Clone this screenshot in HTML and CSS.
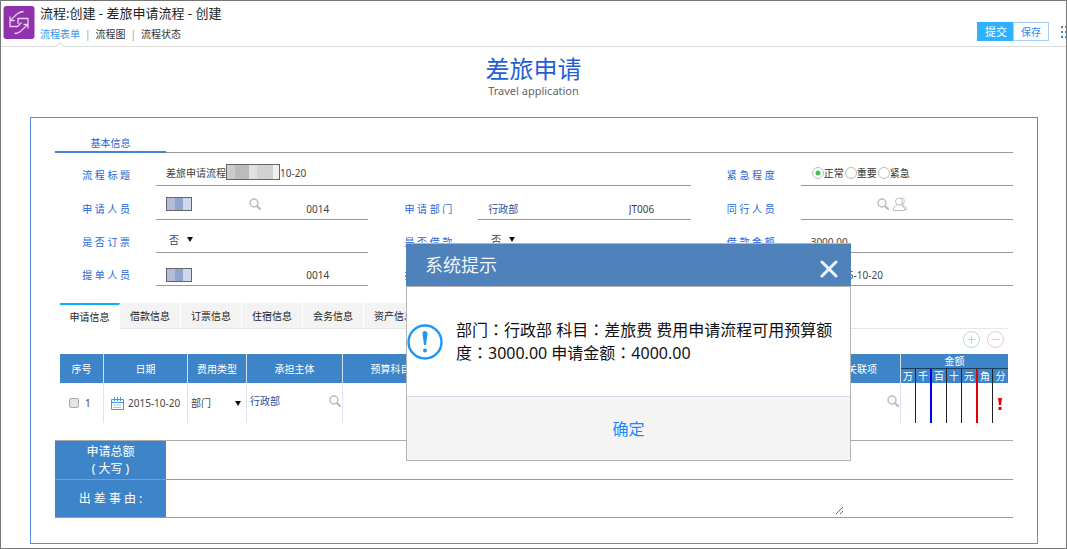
FILE: index.html
```html
<!DOCTYPE html>
<html lang="zh-CN">
<head>
    <meta charset="UTF-8">
    <meta name="viewport" content="width=device-width, initial-scale=1.0">
    <title>流程:创建 - 差旅申请流程 - 创建</title>
    <link rel="stylesheet" href="styles.css">
</head>
<body>
    <svg class="sprite" aria-hidden="true">
        <symbol id="icon-search" viewBox="0 0 12 12">
            <circle cx="5" cy="5" r="4" fill="none" stroke="currentColor" stroke-width="1.5"/>
            <path d="M8.2 8.2L11 11" stroke="currentColor" stroke-width="2.2" stroke-linecap="round"/>
        </symbol>
    </svg>
    <div class="page">
        <header class="topbar">
            <svg class="logo" viewBox="0 0 31 33" aria-hidden="true">
                <rect width="31" height="33" rx="3" fill="#9132ad"/>
                <g fill="none" stroke="#ecd3f3" stroke-width="1.3" stroke-linejoin="round">
                    <path d="M20 5.500C15 5.500 12.500 9 7 14.500M6.500 10.500V20.500H14L18 16.500"/>
                    <path d="M11 27.500C16 27.500 18.500 24 24 18.500M24.500 22.500V12.500H14.500V18M6.500 14.500H11M24.500 18.500H20"/>
                </g>
            </svg>
            <div class="topbar-text">
                <h1>流程:创建 - 差旅申请流程 - 创建</h1>
                <nav>
                    <a href="#form" class="active">流程表单</a>
                    <a href="#chart">流程图</a>
                    <a href="#status">流程状态</a>
                </nav>
            </div>
            <div class="topbar-actions">
                <button type="submit" form="travel-form" class="btn-submit">提交</button>
                <button type="button" class="btn-save">保存</button>
                <button type="button" class="btn-more" aria-label="更多">
                    <svg viewBox="0 0 6 12" width="6" height="12" fill="#4a80c4">
                        <path d="M0 0h2v2H0zM4 0h2v2H4zM0 5h2v2H0zM4 5h2v2H4zM0 10h2v2H0zM4 10h2v2H4z"/>
                    </svg>
                </button>
            </div>
        </header>

        <div class="doc-title">
            <h2>差旅申请</h2>
            <p>Travel application</p>
        </div>

        <form class="panel" id="travel-form">
            <div class="section-head"><h3>基本信息</h3></div>

            <div class="form-grid">
                <span class="label">流 程 标 题</span>
                <div class="field field-wide field-high">
                    <span>差旅申请流程</span>
                    <span class="mask mask-gray"></span>
                    <span>10-20</span>
                </div>
                <span class="label">紧 急 程 度</span>
                <div class="field radios">
                    <input type="radio" name="level" id="level-1" checked><label for="level-1">正常</label>
                    <input type="radio" name="level" id="level-2"><label for="level-2">重要</label>
                    <input type="radio" name="level" id="level-3"><label for="level-3">紧急</label>
                </div>

                <label class="label" for="staff-code">申 请 人 员</label>
                <div class="field">
                    <div class="lookup lookup-high">
                        <span class="mask mask-blue"></span>
                        <button type="button" class="icon-btn" aria-label="选择申请人员"><svg><use href="#icon-search"/></svg></button>
                    </div>
                    <input class="code" id="staff-code" value="0014">
                </div>
                <label class="label" for="dept-code">申 请 部 门</label>
                <div class="field">
                    <a href="#dept" class="lookup">行政部</a>
                    <input class="code" id="dept-code" value="JT006">
                </div>
                <span class="label">同 行 人 员</span>
                <div class="field field-icons">
                    <button type="button" class="icon-btn" aria-label="选择同行人员"><svg><use href="#icon-search"/></svg></button>
                    <button type="button" class="icon-btn people" aria-label="选择人员组">
                        <svg viewBox="0 0 14 14" fill="none" stroke="currentColor">
                            <circle cx="6" cy="4.500" r="3.500"/>
                            <path d="M8.500 1C12 .5 12 6 9.500 8C12 9 13.500 10 13.500 12.500H11.500M4 8C1.500 9 .5 10.500 .5 13.500H11.500C11.500 10.500 10.500 9 8 8"/>
                        </svg>
                    </button>
                </div>

                <label class="label" for="ticket">是 否 订 票</label>
                <div class="field field-high">
                    <select id="ticket"><option>否</option><option>是</option></select><span class="caret"></span>
                </div>
                <label class="label" for="loan">是 否 借 款</label>
                <div class="field field-high">
                    <select id="loan"><option>否</option><option>是</option></select><span class="caret"></span>
                </div>
                <label class="label" for="loan-amount">借 款 金 额</label>
                <div class="field"><input id="loan-amount" value="3000.00"></div>

                <label class="label" for="maker-code">提 单 人 员</label>
                <div class="field">
                    <div class="lookup"><span class="mask mask-blue"></span></div>
                    <input class="code" id="maker-code" value="0014">
                </div>
                <label class="label" for="maker-dept">提 单 部 门</label>
                <div class="field"><input id="maker-dept" value="行政部"></div>
                <label class="label" for="maker-date">提 单 日 期</label>
                <div class="field field-date"><input id="maker-date" value="2015-10-20"></div>
            </div>

            <div class="detail">
                <div class="tabs">
                    <button type="button" class="active">申请信息</button>
                    <button type="button">借款信息</button>
                    <button type="button">订票信息</button>
                    <button type="button">住宿信息</button>
                    <button type="button">会务信息</button>
                    <button type="button">资产信息</button>
                </div>
                <div class="row-tools">
                    <button type="button" class="add" aria-label="添加">
                        <svg viewBox="0 0 17 17"><circle cx="8.500" cy="8.500" r="8"/><path d="M4.500 8.500h8M8.500 4.500v8"/></svg>
                    </button>
                    <button type="button" class="remove" aria-label="删除">
                        <svg viewBox="0 0 17 17"><circle cx="8.500" cy="8.500" r="8"/><path d="M4.500 8.500h8"/></svg>
                    </button>
                </div>
                <table class="items">
                    <colgroup>
                        <col class="c-no"><col class="c-date"><col class="c-type"><col class="c-body"><col class="c-body"><col>
                        <col class="c-link">
                        <col class="c-digit"><col class="c-mark"><col class="c-digit"><col class="c-digit"><col class="c-mark"><col class="c-digit"><col class="c-digit">
                    </colgroup>
                    <thead>
                        <tr>
                            <th rowspan="2">序号</th>
                            <th rowspan="2">日期</th>
                            <th rowspan="2">费用类型</th>
                            <th rowspan="2">承担主体</th>
                            <th rowspan="2">预算科目</th>
                            <th rowspan="2"></th>
                            <th rowspan="2">关联项</th>
                            <th colspan="7" class="amount">金额</th>
                        </tr>
                        <tr class="digits">
                            <th>万</th><th class="blue">千</th><th>百</th><th>十</th><th class="red">元</th><th>角</th><th>分</th>
                        </tr>
                    </thead>
                    <tbody>
                        <tr>
                            <td><div class="cell cell-no"><input type="checkbox" id="row-1"><label for="row-1">1</label></div></td>
                            <td>
                                <div class="cell cell-date">
                                    <svg class="calendar" viewBox="0 0 13 13" aria-hidden="true">
                                        <path d="M.5 2.500h12v10H.5zM.5 5.500h12" fill="none" stroke="#3f97ee"/>
                                        <path d="M3.500 0v4M6.500 0v4M9.500 0v4" stroke="#3f97ee"/>
                                        <path d="M2.500 8h8M2.500 10.500h8" stroke="#3f97ee" stroke-dasharray="1 1"/>
                                    </svg>
                                    <span>2015-10-20</span>
                                </div>
                            </td>
                            <td>
                                <div class="cell cell-type">
                                    <select aria-label="费用类型"><option>部门</option></select><span class="caret"></span>
                                </div>
                            </td>
                            <td>
                                <div class="cell cell-body">
                                    <a href="#dept">行政部</a>
                                    <button type="button" class="icon-btn" aria-label="选择承担主体"><svg><use href="#icon-search"/></svg></button>
                                </div>
                            </td>
                            <td></td>
                            <td></td>
                            <td>
                                <div class="cell cell-body">
                                    <span></span>
                                    <button type="button" class="icon-btn" aria-label="选择关联项"><svg><use href="#icon-search"/></svg></button>
                                </div>
                            </td>
                            <td class="digit"></td><td class="digit blue"></td><td class="digit"></td><td class="digit"></td><td class="digit red"></td><td class="digit"></td>
                            <td class="required">
                                <svg viewBox="0 0 4 12" width="4" height="12" fill="#f00000" role="img" aria-label="必填"><path d="M0 0h4l-1 7H1zM.5 9h3v3h-3z"/></svg>
                            </td>
                        </tr>
                    </tbody>
                </table>
            </div>

            <table class="summary">
                <tbody>
                    <tr>
                        <th scope="row">申请总额<br>( 大写 )</th>
                        <td></td>
                    </tr>
                    <tr>
                        <th scope="row" class="reason"><label for="reason">出 差 事 由 :</label></th>
                        <td><textarea id="reason"></textarea></td>
                    </tr>
                </tbody>
            </table>
        </form>
    </div>

    <div class="dialog" role="alertdialog" aria-labelledby="dialog-title">
        <div class="dialog-head">
            <h2 id="dialog-title">系统提示</h2>
            <button type="button" aria-label="关闭">
                <svg viewBox="0 0 18 18" width="18" height="18"><path d="M2 2l14 14M16 2L2 16" stroke="#eef6fd" stroke-width="3" stroke-linecap="round"/></svg>
            </button>
        </div>
        <div class="dialog-body">
            <svg class="alert-icon" viewBox="0 0 36 36" aria-hidden="true">
                <circle cx="18" cy="18" r="16.500" fill="none" stroke="#2196f3" stroke-width="2.400"/>
                <path d="M15.500 9.500a2.500 2.500 0 0 1 5 0L19 21h-2z" fill="#2196f3"/>
                <circle cx="18" cy="26.500" r="2" fill="#2196f3"/>
            </svg>
            <p lang="zh-TW">部门：行政部 科目：差旅费 费用申请流程可用预算额度：3000.00 申请金额：4000.00</p>
        </div>
        <div class="dialog-foot">
            <button type="button">确定</button>
        </div>
    </div>
</body>
</html>
```
FILE: styles.css
```css
* {
    margin: 0;
    padding: 0;
    box-sizing: border-box;
}
body {
    font-family: "Noto Sans", "Noto Sans CJK SC", sans-serif;
    font-size: 10px;
    line-height: 14px;
    color: #444;
    background-color: #fff;
}
button, input, select, textarea {
    font: inherit;
    color: inherit;
    border: none;
    background: none;
}
button {
    cursor: pointer;
}
a {
    color: #2b4f9e;
    text-decoration: none;
}
.sprite {
    display: none;
}
.page {
    min-height: 100vh;
    border: 1px solid #777;
    overflow: hidden;
}

/* top bar */
.topbar {
    display: flex;
    height: 46px;
    padding-left: 2px;
    border-bottom: 1px solid #ddd;
}
.logo {
    width: 32px;
    height: 33px;
    margin-top: 5px;
}
.topbar-text {
    flex: 1;
    padding: 2px 0 0 5px;
}
.topbar h1 {
    font-size: 13px;
    line-height: 20px;
    font-weight: normal;
    color: #222;
}
.topbar nav {
    display: flex;
    margin-top: 4px;
}
.topbar nav a {
    position: relative;
    color: #333;
}
.topbar nav a + a::before {
    content: "|";
    margin: 0 5px;
    color: #999;
}
.topbar nav .active {
    color: #2f96f0;
}
/* small notch under the current tab */
.topbar nav .active::after {
    content: "";
    position: absolute;
    left: 50%;
    top: 16px;
    width: 5px;
    height: 5px;
    background-color: #fff;
    border: solid #ddd;
    border-width: 1px 0 0 1px;
    transform: translateX(-50%) rotate(45deg);
}
.topbar-actions {
    display: flex;
    align-items: flex-start;
    padding-top: 21px;
}
.btn-submit, .btn-save {
    width: 36px;
    height: 19px;
}
.btn-submit {
    padding-left: 2px;
    font-size: 11px;
    color: #fff;
    background-color: #2eb1ff;
}
.btn-save {
    color: #2f8ae8;
    border: 1px solid #a9cdf5;
}
.btn-more {
    width: 17px;
    height: 20px;
    padding-left: 12px;
    overflow: hidden;
}
.btn-more svg {
    display: block;
}

.doc-title {
    padding: 10px 0 18px;
    text-align: center;
}
.doc-title h2 {
    font-family: "Liberation Serif", "Noto Sans CJK SC", serif;
    font-size: 24px;
    line-height: 26px;
    font-weight: normal;
    color: #1f5fd6;
}
.doc-title p {
    font-size: 11px;
    line-height: 16px;
    color: #666;
}

/* form */
.panel {
    margin: 0 28px 4px 29px;
    padding: 0 24px 25px;
    border: 1px solid #5b8bdb;
}
.section-head {
    display: flex;
    align-items: flex-end;
    height: 35px;
    border-bottom: 1px solid #999;
}
.section-head h3 {
    width: 111px;
    margin-bottom: -1px;
    padding-bottom: 1px;
    border-bottom: 2px solid #4682d9;
    font-size: 10px;
    text-align: center;
    font-weight: normal;
    color: #1f5fd6;
}
.form-grid {
    display: grid;
    grid-template-columns: 101px 1fr 110px 1fr 110px 1fr;
    grid-template-rows: 33px 34px 33px 33px;
}
.label {
    align-self: end;
    padding: 0 26px 4px 0;
    text-align: right;
    white-space: nowrap;
    color: #2766d4;
}
.field {
    display: flex;
    align-items: flex-end;
    min-width: 0;
    padding: 0 0 3px 10px;
    border-bottom: 1px solid #999;
}
.field-high {
    padding-bottom: 5px;
}
.field-wide {
    grid-column: span 3;
}
.field-date {
    padding-left: 30px;
}
.field input {
    min-width: 0;
}
.field .code {
    width: 62px;
}
.field select, .cell select {
    appearance: none;
}
.field select {
    width: 18px;
    margin-left: 3px;
}
.lookup {
    flex: 1;
    display: flex;
    align-items: center;
    justify-content: space-between;
    padding-right: 45px;
}
.lookup-high {
    padding-bottom: 5px;
}
.mask {
    width: 26px;
    height: 14px;
    border: 1px solid #666;
}
.mask-blue {
    background: linear-gradient(90deg, #b3bddb 33%, #92a4cc 33% 66%, #cfd7ea 66%);
}
.mask-gray {
    width: 54px;
    height: 16px;
    background: linear-gradient(90deg, #ccc 15%, #bbb 15% 42%, #e2e2e2 42% 58%, #d2d2d2 58% 88%, #f0f0f0 88%);
}
.icon-btn {
    width: 12px;
    height: 12px;
    color: #bbb;
}
.icon-btn svg {
    display: block;
    width: 100%;
    height: 100%;
}
.icon-btn.people {
    width: 14px;
    height: 14px;
}
.field-icons {
    justify-content: flex-end;
    align-items: center;
    gap: 4px;
    padding: 2px 106px 0 0;
}
.caret {
    align-self: center;
    border: 3px solid transparent;
    border-top: 5px solid #111;
    border-bottom: none;
}
.field .caret {
    margin-top: 12px;
}
.radios {
    align-items: center;
    padding-top: 8px;
    padding-bottom: 0;
}
.radios label {
    color: #333;
}
.radios input {
    appearance: none;
    flex: none;
    width: 12px;
    height: 12px;
    margin-left: 1px;
    border: 1px solid #bbb;
    border-radius: 50%;
}
.radios input:checked {
    background: radial-gradient(#3cc35e 0 2px, #fff 3px);
}

/* detail tabs and table */
.detail {
    margin: 17px 5px 0;
}
.tabs {
    display: flex;
    height: 26px;
    border-bottom: 1px solid #e6e6e6;
}
.tabs button {
    width: 61px;
    height: 25px;
    border-right: 1px solid #fff;
    background-color: #f3f3f3;
    color: #222;
}
.tabs .active {
    width: 60px;
    height: 26px;
    border-top: 2px solid #0ab0ff;
    background-color: #fff;
}
.row-tools {
    display: flex;
    justify-content: flex-end;
    gap: 7px;
    padding: 2px 4px 6px;
}
.row-tools svg {
    display: block;
    width: 17px;
    height: 17px;
    fill: none;
    stroke: currentColor;
}
.add {
    color: #a9e3b4;
}
.remove {
    color: #f6c0c4;
}
.items, .summary {
    width: 100%;
    border-collapse: separate;
    border-spacing: 0;
    table-layout: fixed;
}
.c-no { width: 44px; }
.c-date { width: 84px; }
.c-type { width: 59px; }
.c-body { width: 96px; }
.c-link { width: 77px; }
.c-digit { width: 15px; }
.c-mark { width: 16px; }
.items th {
    height: 15px;
    background-color: #3d85c8;
    border-right: 1px solid #cfe0f0;
    font-weight: normal;
    color: #fff;
}
.items .amount {
    border-right: none;
    border-bottom: 1px solid #1c3d5e;
}
.items .digits th {
    height: 14px;
    border-color: #222;
    line-height: 13px;
}
.items td {
    height: 40px;
    border-right: 1px solid #d9e4f0;
}
.items .digit {
    border-right: 1px solid #222;
}
.items .digits .blue, .items .blue {
    border-right: 2px solid #0000f0;
}
.items .digits .red, .items .red {
    border-right: 2px solid #e60000;
}
.items .digits th:last-child, .items td:last-child {
    border-right: none;
}
.required {
    text-align: center;
}
.required svg {
    vertical-align: middle;
}
.cell {
    display: flex;
    align-items: center;
}
.cell-no {
    gap: 6px;
    padding-left: 9px;
}
.cell-no input {
    appearance: none;
    width: 10px;
    height: 10px;
    border: 1px solid #aaa;
    border-radius: 2px;
    background-color: #e4e4e4;
}
.cell-date {
    gap: 4px;
    padding-left: 7px;
}
.calendar {
    width: 13px;
    height: 13px;
}
.cell-type {
    justify-content: space-between;
    padding: 0 5px 0 3px;
}
.cell-body {
    justify-content: space-between;
    padding: 0 1px 4px 3px;
}

.summary {
    margin-top: 17px;
    border-top: 1px solid #aaa;
}
.summary th {
    width: 111px;
    height: 39px;
    background-color: #3d85c8;
    border-bottom: 1px solid #7f9fbe;
    font-size: 12px;
    line-height: 17px;
    font-weight: normal;
    color: #fff;
}
.summary .reason {
    height: 38px;
}
.summary td {
    border-bottom: 1px solid #999;
}
.summary textarea {
    display: block;
    width: 80%;
    height: 32px;
    resize: both;
    outline: none;
}

/* message dialog */
.dialog {
    position: absolute;
    left: 406px;
    top: 243px;
    width: 445px;
    border: 1px solid #b5b5b5;
    background-color: #fff;
}
.dialog-head {
    display: flex;
    align-items: center;
    justify-content: space-between;
    height: 43px;
    margin: 0 -1px;
    padding: 0 13px 0 19px;
    border-bottom: 1px solid #b5b5b5;
    background-color: #4f81bb;
}
.dialog-head h2 {
    font-size: 18px;
    line-height: 24px;
    font-weight: normal;
    color: #eef4fb;
}
.dialog-head svg {
    display: block;
    margin-top: 7px;
}
.dialog-body {
    display: flex;
    align-items: center;
    gap: 13px;
    height: 109px;
    color: #111;
    font-size: 16px;
    line-height: 23px;
}
.dialog-body p {
    flex: 1;
    font-family: "Noto Sans", "Noto Sans CJK TC", sans-serif;
}
.alert-icon {
    flex: none;
    width: 36px;
    height: 36px;
}
.dialog-foot {
    display: flex;
    justify-content: center;
    height: 64px;
    border-top: 1px solid #d5dbe6;
    background-color: #f4f4f4;
}
.dialog-foot button {
    padding: 0 20px;
    font-size: 16px;
    color: #1a88ff;
}
```
